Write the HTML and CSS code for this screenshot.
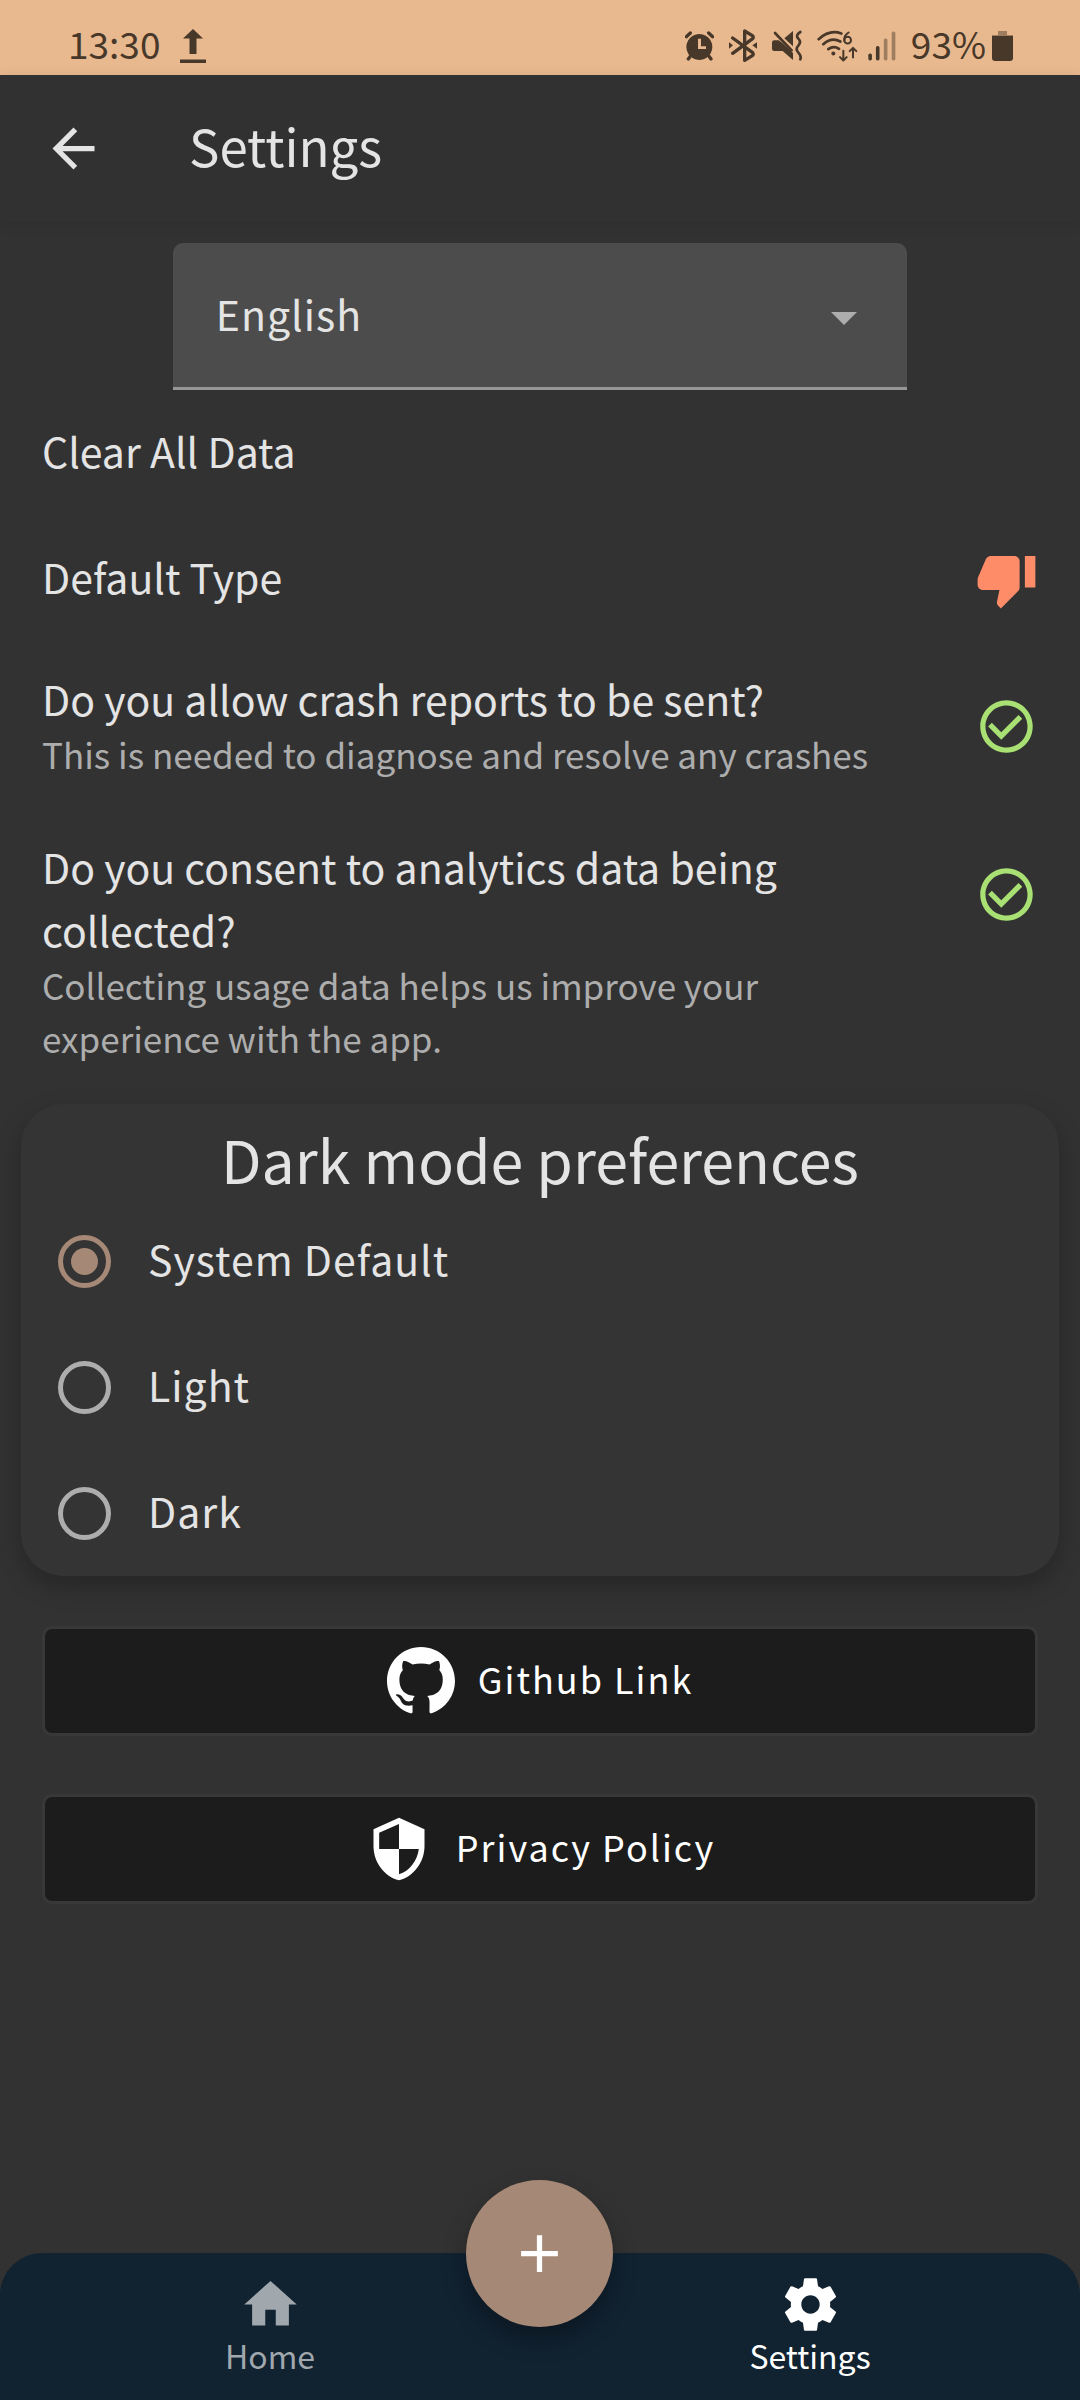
FILE: index.html
```html
<!DOCTYPE html>
<html lang="en">
<head>
  <meta charset="utf-8">
  <meta name="viewport" content="width=device-width, initial-scale=1">
  <title>Settings</title>
  <link rel="stylesheet" href="styles.css">
</head>
<body>
  <div class="status-bar">
    <span class="clock label">13:30</span>
    <svg class="status-icon upload" viewBox="0 0 26 34" width="26" height="34" aria-hidden="true"><path d="M13 0l10 9.500h-6.500V25h-7V9.500H3zM0 30.500h26V34H0z"/></svg>
    <div class="status-icons">
      <svg class="status-icon" viewBox="135 89 87 96" width="29" height="32" aria-hidden="true">
        <path d="M178 101a39 39 0 1 0 .1 0zM174 115h9v23h15v8h-24z" fill-rule="evenodd"/>
        <path class="stroke thick" d="M139 109l12-11M218 109l-12-11M151 168l-6 8M207 168l6 8"/>
      </svg>
      <svg class="status-icon" viewBox="269 87 84 99" width="28" height="33" aria-hidden="true">
        <path class="stroke thick" d="M280 114l60 44q4 5-1 9l-23 14V93l23 14q5 4 1 9l-60 44"/>
        <path d="M269 127l12 9-12 10zM353 127l-14 9 14 10z"/>
      </svg>
      <svg class="status-icon" viewBox="399 90 90 93" width="30" height="31" aria-hidden="true">
        <path d="M406 121h13l12 9 31 29v21l-31-27h-25q-7 0-7-7v-18q0-7 7-7zM436 115l26-22v46z"/>
        <path class="stroke medium" d="M408 99l50 52"/>
        <path class="stroke medium" d="M484 96q-16 10-6 20t0 21 0 21 6 20"/>
      </svg>
      <svg class="status-icon" viewBox="530 90 123 95" width="41" height="32" aria-hidden="true">
        <path class="stroke medium" d="M535 117q33-30 68-17M549 132q25-22 51-8M564 147q16-12 32-1"/>
        <circle cx="579" cy="160" r="6"/>
        <path class="stroke thin" d="M625 97q-15 9-13 24"/><circle class="stroke thin" cx="622" cy="120" r="10"/>
        <path class="stroke thin" d="M609 152v28M599 171l10 10 10-10M638 172v-28M628 153l10-10 10 10"/>
      </svg>
      <svg class="status-icon signal" viewBox="681 92 85 90" width="28" height="30" aria-hidden="true">
        <rect x="682" y="160" width="11" height="21" rx="5"/><rect x="705" y="137" width="11" height="44" rx="5"/>
        <rect class="faded" x="729" y="114" width="11" height="67" rx="5"/><rect class="faded" x="753" y="93" width="11" height="88" rx="5"/>
      </svg>
      <span class="battery-level label">93%</span>
      <svg class="status-icon" viewBox="0 0 21 30" width="21" height="30" aria-hidden="true"><path class="faded" d="M6 0h9v4h6v1H0V4h6z"/><path d="M0 5h21v22q0 3-3 3H3q-3 0-3-3z"/></svg>
    </div>
  </div>

  <header class="app-bar">
    <button class="icon-button" type="button" aria-label="Back"><svg class="icon" viewBox="0 0 24 24" aria-hidden="true"><path d="M20 11H7.830l5.590-5.590L12 4l-8 8 8 8 1.410-1.410L7.830 13H20v-2z"/></svg></button>
    <h1 class="app-title label">Settings</h1>
  </header>

  <main class="content">
    <div class="language">
      <select class="language-select" aria-label="Language"><option>English</option></select>
      <svg class="caret" viewBox="0 0 26 13" aria-hidden="true"><path d="M0 0h26L13 13z"/></svg>
    </div>

    <button class="row" type="button"><span class="label">Clear All Data</span></button>
    <button class="row" type="button">
      <span class="label">Default Type</span>
      <svg class="icon negative" viewBox="0 0 24 24" aria-hidden="true"><path d="M15 3H6c-.83 0-1.540.5-1.840 1.220l-3.020 7.050c-.09.23-.14.47-.14.73v2c0 1.100.9 2 2 2h6.310l-.95 4.570-.03.32c0 .41.17.79.44 1.060L9.830 23l6.590-6.590c.36-.36.58-.86.58-1.410V5c0-1.100-.9-2-2-2zm4 0v12h4V3h-4z"/></svg>
    </button>
    <label class="row row-detailed">
      <span class="row-text">
        <span class="row-title">Do you allow crash reports to be sent?</span>
        <span class="row-note">This is needed to diagnose and resolve any crashes</span>
      </span>
      <span class="check">
        <input class="check-input" type="checkbox" checked>
        <svg class="icon check-mark" viewBox="0 0 24 24" aria-hidden="true"><path d="M16.590 7.580L10 14.170l-3.590-3.580L5 12l5 5 8-8zM12 2C6.480 2 2 6.480 2 12s4.480 10 10 10 10-4.480 10-10S17.520 2 12 2zm0 18c-4.420 0-8-3.580-8-8s3.580-8 8-8 8 3.580 8 8-3.580 8-8 8z"/></svg>
      </span>
    </label>
    <label class="row row-detailed">
      <span class="row-text">
        <span class="row-title">Do you consent to analytics data being collected?</span>
        <span class="row-note">Collecting usage data helps us improve your experience with the app.</span>
      </span>
      <span class="check">
        <input class="check-input" type="checkbox" checked>
        <svg class="icon check-mark" viewBox="0 0 24 24" aria-hidden="true"><path d="M16.590 7.580L10 14.170l-3.590-3.580L5 12l5 5 8-8zM12 2C6.480 2 2 6.480 2 12s4.480 10 10 10 10-4.480 10-10S17.520 2 12 2zm0 18c-4.420 0-8-3.580-8-8s3.580-8 8-8 8 3.580 8 8-3.580 8-8 8z"/></svg>
      </span>
    </label>

    <section class="card" role="radiogroup" aria-labelledby="theme-title">
      <h2 class="card-title" id="theme-title">Dark mode preferences</h2>
      <label class="option"><input class="radio" type="radio" name="theme" checked><span class="label">System Default</span></label>
      <label class="option"><input class="radio" type="radio" name="theme"><span class="label">Light</span></label>
      <label class="option"><input class="radio" type="radio" name="theme"><span class="label">Dark</span></label>
    </section>

    <div class="links">
      <a class="link-button" href="#github">
        <svg class="link-icon" viewBox="0 0 16 16" aria-hidden="true"><path d="M8 0C3.580 0 0 3.580 0 8c0 3.540 2.290 6.530 5.470 7.590.4.07.55-.17.55-.38 0-.19-.01-.82-.01-1.490-2.010.37-2.530-.49-2.690-.94-.09-.23-.48-.94-.82-1.130-.28-.15-.68-.52-.01-.53.63-.01 1.080.58 1.230.82.72 1.210 1.870.87 2.330.66.07-.52.28-.87.51-1.070-1.780-.2-3.640-.89-3.640-3.950 0-.87.31-1.590.82-2.150-.08-.2-.36-1.020.08-2.120 0 0 .67-.21 2.200.82.64-.18 1.320-.27 2-.27s1.360.09 2 .27c1.530-1.040 2.200-.82 2.200-.82.44 1.100.16 1.920.08 2.120.51.56.82 1.270.82 2.150 0 3.070-1.870 3.750-3.650 3.950.29.25.54.73.54 1.480 0 1.070-.01 1.930-.01 2.200 0 .21.15.46.55.38A8.010 8.010 0 0 0 16 8c0-4.420-3.580-8-8-8z"/></svg>
        <span class="label">Github Link</span>
      </a>
      <a class="link-button" href="#privacy">
        <svg class="link-icon" viewBox="0 0 24 24" aria-hidden="true"><path d="M12 1L3 5v6c0 5.550 3.840 10.740 9 12 5.160-1.260 9-6.450 9-12V5l-9-4zm0 10.990h7c-.53 4.120-3.280 7.790-7 8.940V12H5V6.300l7-3.110v8.800z"/></svg>
        <span class="label">Privacy Policy</span>
      </a>
    </div>
  </main>

  <nav class="bottom-nav">
    <a class="tab" href="#home"><svg class="icon" viewBox="0 0 24 24" aria-hidden="true"><path d="M10 20v-6h4v6h5v-8h3L12 3 2 12h3v8z"/></svg>Home</a>
    <a class="tab tab-active" href="#settings" aria-current="page"><svg class="icon" viewBox="0 0 24 24" aria-hidden="true"><path d="M19.430 12.980c.04-.32.07-.64.07-.98s-.03-.66-.07-.98l2.110-1.650c.19-.15.24-.42.12-.64l-2-3.460c-.12-.22-.39-.3-.61-.22l-2.490 1c-.52-.4-1.080-.73-1.690-.98l-.38-2.650C14.460 2.180 14.250 2 14 2h-4c-.25 0-.46.18-.49.42l-.38 2.650c-.61.25-1.170.59-1.690.98l-2.490-1c-.23-.09-.49 0-.61.22l-2 3.460c-.13.22-.07.49.12.64l2.110 1.650c-.04.32-.07.65-.07.98s.03.66.07.98l-2.110 1.650c-.19.15-.24.42-.12.64l2 3.460c.12.22.39.3.61.22l2.490-1c.52.4 1.080.73 1.690.98l.38 2.650c.03.24.24.42.49.42h4c.25 0 .46-.18.49-.42l.38-2.650c.61-.25 1.170-.59 1.690-.98l2.490 1c.23.09.49 0 .61-.22l2-3.460c.12-.22.07-.49-.12-.64l-2.110-1.650zM12 15.500c-1.930 0-3.500-1.570-3.500-3.500s1.570-3.500 3.500-3.500 3.500 1.570 3.500 3.500-1.570 3.500-3.500 3.500z"/></svg>Settings</a>
    <button class="fab" type="button" aria-label="Add"><svg class="icon" viewBox="0 0 24 24" aria-hidden="true"><path d="M19 13h-6v6h-2v-6H5v-2h6V5h2v6h6v2z"/></svg></button>
  </nav>
</body>
</html>
```
FILE: styles.css
```css
:root {
  --background: #323232;
  --surface: #343434;
  --text: #e4e4e4;
  --muted: #adadad;
  --accent: #a58876;
  --gutter: 42px;
}

* {
  box-sizing: border-box;
}

body {
  margin: 0;
  min-height: 100vh;
  display: flex;
  flex-direction: column;
  background: var(--background);
  color: var(--text);
  font-family: "Noto Sans CJK SC", "Noto Sans", sans-serif;
  font-size: 41px;
  line-height: 63px;
}

button,
select,
input {
  margin: 0;
  border: 0;
  padding: 0;
  background: none;
  color: inherit;
  font: inherit;
}

a {
  color: inherit;
  text-decoration: none;
}

/* Centres the capitals of a one-line label on the icon beside it */
.label {
  padding-bottom: 6px;
}

.icon {
  display: block;
  flex: none;
  width: 63px;
  height: 63px;
  fill: currentColor;
}

/* Status bar */
.status-bar {
  display: flex;
  align-items: center;
  height: 75px;
  padding: 16px 67px 0 68px;
  background: #e8b88f;
  color: #483829;
  font-size: 37px;
  line-height: 52px;
}

.status-icon {
  display: block;
  flex: none;
  fill: currentColor;
}

.upload {
  margin-left: 20px;
}

.status-icons {
  display: flex;
  align-items: center;
  gap: 15px;
  margin-left: auto;
}

.signal {
  margin-left: -5px;
}

.battery-level {
  margin-right: -9px;
}

.stroke {
  fill: none;
  stroke: currentColor;
  stroke-linecap: round;
  stroke-linejoin: round;
}

.thick {
  stroke-width: 10;
}

.medium {
  stroke-width: 8;
}

.thin {
  stroke-width: 6;
}

.faded {
  opacity: 0.45;
}

/* App bar */
.app-bar {
  display: flex;
  align-items: center;
  gap: 84px;
  height: 147px;
  padding: 0 var(--gutter);
  background: #313131;
  box-shadow: 0 2px 12px rgba(0, 0, 0, 0.1);
}

.app-title {
  margin: 0;
  font-size: 51px;
  font-weight: 400;
}

/* Settings list */
.content {
  flex: 1;
  padding-top: 21px;
}

.language {
  position: relative;
  width: 68%;
  margin: 0 auto;
}

.language-select {
  display: block;
  appearance: none;
  width: 100%;
  height: 147px;
  padding: 0 84px 4px 43px;
  border-bottom: 3px solid #969696;
  border-radius: 10px 10px 0 0;
  background: #4c4c4c;
  letter-spacing: 1px;
}

.caret {
  position: absolute;
  top: 69px;
  right: 50px;
  width: 26px;
  height: 13px;
  fill: #adadad;
  pointer-events: none;
}

.row {
  display: flex;
  align-items: center;
  justify-content: space-between;
  gap: var(--gutter);
  width: 100%;
  min-height: 126px;
  padding: 0 var(--gutter);
  text-align: left;
}

.row-detailed {
  align-items: flex-start;
  min-height: 168px;
  padding-top: 25px;
  padding-bottom: 19px;
}

.row-text {
  flex: 1;
}

.row-title,
.row-note {
  display: block;
}

.row-note {
  margin-top: -3px;
  color: var(--muted);
  font-size: 35px;
  line-height: 53px;
}

.negative {
  color: #ff8c69;
}

.check {
  display: grid;
  margin-top: 28px;
  color: #a8e073;
}

.check-input,
.check-mark {
  grid-area: 1 / 1;
}

.check-input {
  appearance: none;
  width: 63px;
  height: 63px;
}

.check-mark {
  pointer-events: none;
}

/* Theme card */
.card {
  margin: 21px 21px 50px;
  padding: 16px 37px 0;
  border-radius: 42px;
  background: var(--surface);
  box-shadow: 0 10px 24px rgba(0, 0, 0, 0.25);
}

.card-title {
  margin: 0;
  font-size: 59px;
  font-weight: 400;
  line-height: 78px;
  text-align: center;
}

.option {
  display: flex;
  align-items: center;
  gap: 37px;
  height: 126px;
  letter-spacing: 1px;
}

.radio {
  appearance: none;
  display: grid;
  place-items: center;
  width: 53px;
  height: 53px;
  border: 5px solid var(--muted);
  border-radius: 50%;
}

.radio:checked {
  border-color: var(--accent);
}

.radio:checked::before {
  content: "";
  width: 27px;
  height: 27px;
  border-radius: 50%;
  background: var(--accent);
}

/* Link buttons */
.links {
  display: flex;
  flex-direction: column;
  gap: 58px;
  padding: 0 var(--gutter);
}

.link-button {
  display: flex;
  align-items: center;
  justify-content: center;
  gap: 23px;
  height: 110px;
  border: 3px solid #383838;
  border-radius: 10px;
  background: #1c1c1c;
  color: #fff;
  font-size: 36px;
  letter-spacing: 2px;
}

.link-icon {
  width: 68px;
  height: 68px;
  fill: currentColor;
}

/* Bottom navigation */
.bottom-nav {
  position: relative;
  display: grid;
  grid-template-columns: 1fr 1fr;
  height: 147px;
  border-radius: 42px 42px 0 0;
  background: #112231;
}

.tab {
  display: flex;
  flex-direction: column;
  align-items: center;
  padding-top: 20px;
  color: #a0a7ad;
  font-size: 32px;
  line-height: 38px;
}

.tab-active {
  color: #fff;
}

.fab {
  position: absolute;
  top: -73px;
  left: calc(50% - 74px);
  display: grid;
  place-items: center;
  width: 147px;
  height: 147px;
  border-radius: 50%;
  background: var(--accent);
  color: #fff;
  box-shadow: 0 12px 24px rgba(0, 0, 0, 0.3);
}
```
